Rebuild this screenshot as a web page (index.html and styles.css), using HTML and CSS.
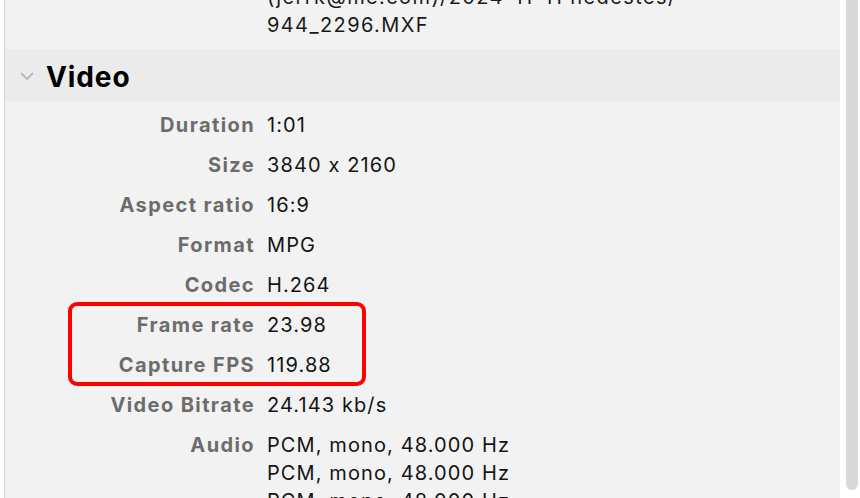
FILE: index.html
```html
<!DOCTYPE html>
<html lang="en">
<head>
<meta charset="utf-8">
<title>Info</title>
<link rel="stylesheet" href="styles.css">
</head>
<body>
<div class="window">
  <div class="panel">
    <div class="path">
      <div>(jerrk@me.com)/2024-11-11 nedestes/</div>
      <div>944_2296.MXF</div>
    </div>

    <div class="section-header">
      <svg class="chevron" width="14" height="9" viewBox="0 0 14 9" aria-hidden="true">
        <path d="M1.5 1.5 L7 7 L12.5 1.5" fill="none" stroke="#b8b8b8" stroke-width="1.8" stroke-linecap="round" stroke-linejoin="round"/>
      </svg>
      <span class="section-title">Video</span>
    </div>

    <div class="props">
      <div class="label">Duration</div><div class="value">1:01</div>
      <div class="label">Size</div><div class="value">3840 x 2160</div>
      <div class="label">Aspect ratio</div><div class="value">16:9</div>
      <div class="label">Format</div><div class="value">MPG</div>
      <div class="label">Codec</div><div class="value">H.264</div>
      <div class="label">Frame rate</div><div class="value">23.98</div>
      <div class="label">Capture FPS</div><div class="value">119.88</div>
      <div class="label">Video Bitrate</div><div class="value">24.143 kb/s</div>
      <div class="label">Audio</div>
      <div class="value">
        <div>PCM, mono, 48.000 Hz</div>
        <div>PCM, mono, 48.000 Hz</div>
        <div>PCM, mono, 48.000 Hz</div>
      </div>
    </div>

    <div class="highlight"></div>
  </div>
  <div class="scrollbar"><div class="thumb"></div></div>
</div>
</body>
</html>
```

FILE: styles.css
```css
html, body {
  margin: 0;
  padding: 0;
  background: #ffffff;
}

body {
  font-family: Inter, "Noto Sans", "Liberation Sans", sans-serif;
  font-feature-settings: "calt" 0;
  color: #1d1d1d;
  overflow: hidden;
}

.window {
  display: flex;
  height: 498px;
  padding-left: 4px;
}

.panel {
  position: relative;
  width: 835px;
  height: 498px;
  background: #f2f2f2;
  border-left: 1px solid #d2d2d2;
  overflow: hidden;
  font-size: 20px;
  line-height: 28px;
  letter-spacing: 1.1px;
}

.path {
  margin-top: -17px;
  padding-left: 262px;
  color: #1a1a1a;
  letter-spacing: 1.4px;
}

.section-header {
  margin-top: 10px;
  height: 53px;
  background: #ebebeb;
  display: flex;
  align-items: center;
  padding-left: 15px;
}

.chevron {
  display: block;
  margin-top: 2px;
}

.section-title {
  margin-left: 12px;
  margin-top: 3px;
  font-size: 28px;
  font-weight: 700;
  color: #000000;
  letter-spacing: 0.9px;
}

.props {
  display: grid;
  grid-template-columns: 250px 1fr;
  column-gap: 12px;
  row-gap: 12px;
  padding-top: 9px;
}

.label {
  text-align: right;
  font-weight: 700;
  color: #6c6c6c;
  letter-spacing: 1.4px;
}

.value {
  color: #141414;
}

.highlight {
  position: absolute;
  left: 63px;
  top: 302px;
  width: 298px;
  height: 84px;
  box-sizing: border-box;
  border: 4px solid #ff0000;
  border-radius: 9px;
}

.scrollbar {
  width: 12px;
  margin-left: 6px;
  height: 498px;
}

.thumb {
  height: 490px;
  background: #d9d9d9;
  border-radius: 0 0 6px 6px;
}
```
